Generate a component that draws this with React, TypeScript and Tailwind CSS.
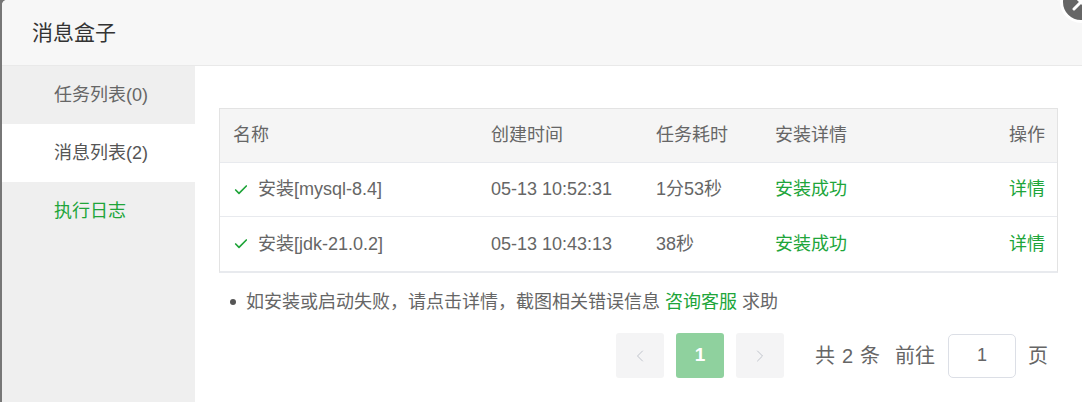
import { Check, ChevronLeft, ChevronRight } from "lucide-react";

type Task = {
  name: string;
  createdAt: string;
  duration: string;
  status: string;
};

const tasks: Task[] = [
  { name: "安装[mysql-8.4]", createdAt: "05-13 10:52:31", duration: "1分53秒", status: "安装成功" },
  { name: "安装[jdk-21.0.2]", createdAt: "05-13 10:43:13", duration: "38秒", status: "安装成功" },
];

const tabs = [
  { label: "任务列表(0)", active: false, green: false },
  { label: "消息列表(2)", active: true, green: false },
  { label: "执行日志", active: false, green: true },
];

const cols = "grid grid-cols-[258px_165px_119px_1fr_auto] items-center pl-[13px] pr-[12px]";

const App = () => {
  return (
    <div className="relative w-[1082px] h-[402px] overflow-hidden bg-[#777] pl-[2px] font-['Liberation_Sans','Noto_Sans_CJK_SC',sans-serif] text-[18px] text-[#666]">
      <div className="flex flex-col h-[420px] w-[1100px] bg-white rounded-tl-[5px] overflow-hidden">
        <div className="h-[66px] shrink-0 bg-[#f7f7f7] border-b border-[#e9e9e9] flex items-center pl-[30px]">
          <h2 className="text-[21px] text-[#333]">消息盒子</h2>
        </div>

        <div className="flex flex-1">
          <div className="w-[193px] shrink-0 bg-[#efefef] flex flex-col">
            {tabs.map((tab) => (
              <div
                key={tab.label}
                className={`h-[58px] flex items-center pl-[52px] ${tab.active ? "bg-white text-[#555]" : ""} ${
                  tab.green ? "text-[#20a53a]" : ""
                }`}
              >
                {tab.label}
              </div>
            ))}
          </div>

          <div className="w-[887px] pl-[24px] pt-[42px]">
            <div className="w-[839px] border border-[#e3e3e3] border-b-2 border-b-[#e8eaee]">
              <div className={`${cols} h-[54px] bg-[#f5f5f5] border-b border-[#e8eaee]`}>
                <span>名称</span>
                <span>创建时间</span>
                <span>任务耗时</span>
                <span>安装详情</span>
                <span>操作</span>
              </div>
              {tasks.map((task, i) => (
                <div
                  key={task.name}
                  className={`${cols} h-[54px] ${i < tasks.length - 1 ? "border-b border-[#e8eaee]" : ""}`}
                >
                  <span className="flex items-center gap-[9px]">
                    <Check size={16} strokeWidth={2.5} className="text-[#20a53a]" />
                    {task.name}
                  </span>
                  <span>{task.createdAt}</span>
                  <span>{task.duration}</span>
                  <span className="text-[#20a53a]">{task.status}</span>
                  <span className="text-[#20a53a]">详情</span>
                </div>
              ))}
            </div>

            <div className="flex items-center mt-[16px] pl-[11px] h-[26px]">
              <span className="w-[6px] h-[6px] rounded-full bg-[#555] mr-[10px]" />
              <span>
                如安装或启动失败，请点击详情，截图相关错误信息{" "}
                <span className="text-[#20a53a]">咨询客服</span> 求助
              </span>
            </div>

            <div className="flex items-center justify-end mt-[18px] w-[829px] text-[20px]">
              <button className="w-[48px] h-[45px] rounded-[3px] bg-[#f4f4f5] flex items-center justify-center text-[#c0c4cc]">
                <ChevronLeft size={20} strokeWidth={1.2} />
              </button>
              <button className="ml-[12px] w-[48px] h-[45px] rounded-[3px] bg-[#8fd19e] text-white font-bold text-[19px]">
                1
              </button>
              <button className="ml-[12px] w-[48px] h-[45px] rounded-[3px] bg-[#f4f4f5] flex items-center justify-center text-[#c0c4cc]">
                <ChevronRight size={20} strokeWidth={1.2} />
              </button>
              <span className="ml-[31px] w-[65px] flex justify-between">
                <span>共</span>
                <span>2</span>
                <span>条</span>
              </span>
              <span className="ml-[15px]">前往</span>
              <div className="ml-[13px] w-[68px] h-[44px] rounded-[5px] border border-[#dcdfe6] flex items-center justify-center text-[18px]">
                1
              </div>
              <span className="ml-[12px]">页</span>
            </div>
          </div>
        </div>
      </div>

      <div className="absolute left-[1060px] top-[-19px] w-[42px] h-[42px] rounded-full bg-[#666] border-[3px] border-white">
        <svg viewBox="0 0 36 36" className="w-full h-full">
          <path d="M11 25 L25 11 M11 11 L25 25" stroke="white" strokeWidth="3" strokeLinecap="round" />
        </svg>
      </div>
    </div>
  );
};

export default App;
